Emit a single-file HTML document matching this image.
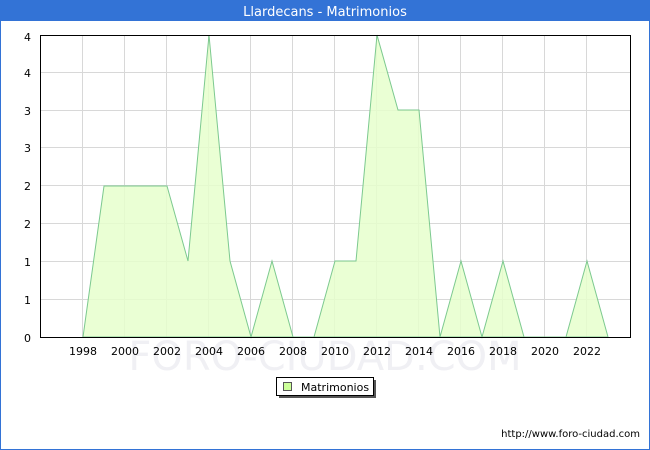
<!DOCTYPE html><html><head><style>body{margin:0}svg{display:block}text{font-family:"DejaVu Sans","Liberation Sans",sans-serif}</style></head><body>
<svg width="650" height="450" xmlns="http://www.w3.org/2000/svg">
<rect x="0" y="0" width="650" height="450" fill="#fff" stroke="#3373d6" stroke-width="2"/>
<rect x="0" y="0" width="650" height="21" fill="#3373d6"/>
<text x="325" y="16" fill="#fff" font-size="13" text-anchor="middle">Llardecans - Matrimonios</text>
<text x="325" y="370" fill="#f0f0f4" font-size="40" text-anchor="middle">FORO-CIUDAD.COM</text>
<g stroke="#d8d8d8" stroke-width="1">
<line x1="40" x2="630" y1="72.5" y2="72.5"/><line x1="40" x2="630" y1="110.5" y2="110.5"/><line x1="40" x2="630" y1="147.5" y2="147.5"/><line x1="40" x2="630" y1="185.5" y2="185.5"/><line x1="40" x2="630" y1="223.5" y2="223.5"/><line x1="40" x2="630" y1="261.5" y2="261.5"/><line x1="40" x2="630" y1="299.5" y2="299.5"/>
<line x1="82.5" x2="82.5" y1="35" y2="337"/><line x1="124.5" x2="124.5" y1="35" y2="337"/><line x1="166.5" x2="166.5" y1="35" y2="337"/><line x1="208.5" x2="208.5" y1="35" y2="337"/><line x1="250.5" x2="250.5" y1="35" y2="337"/><line x1="292.5" x2="292.5" y1="35" y2="337"/><line x1="334.5" x2="334.5" y1="35" y2="337"/><line x1="376.5" x2="376.5" y1="35" y2="337"/><line x1="418.5" x2="418.5" y1="35" y2="337"/><line x1="460.5" x2="460.5" y1="35" y2="337"/><line x1="502.5" x2="502.5" y1="35" y2="337"/><line x1="544.5" x2="544.5" y1="35" y2="337"/><line x1="586.5" x2="586.5" y1="35" y2="337"/>
</g>
<polygon fill="#e6ffcc" fill-opacity="0.85" stroke="#7cc98f" stroke-width="1" points="83,337 104,186 125,186 146,186 167,186 188,261 209,35 230,261 251,337 272,261 293,337 314,337 335,261 356,261 377,35 398,110 419,110 440,337 461,261 482,337 503,261 524,337 545,337 566,337 587,261 608,337"/>
<rect x="40.5" y="35.5" width="590" height="302" fill="none" stroke="#000" stroke-width="1"/>
<g font-size="11" text-anchor="end" fill="#000">
<text x="31" y="41">4</text><text x="31" y="77">4</text><text x="31" y="115">3</text><text x="31" y="152">3</text><text x="31" y="190">2</text><text x="31" y="228">2</text><text x="31" y="266">1</text><text x="31" y="304">1</text><text x="31" y="342">0</text>
</g>
<g font-size="11" text-anchor="middle" fill="#000">
<text x="83" y="355">1998</text><text x="125" y="355">2000</text><text x="167" y="355">2002</text><text x="209" y="355">2004</text><text x="251" y="355">2006</text><text x="293" y="355">2008</text><text x="335" y="355">2010</text><text x="377" y="355">2012</text><text x="419" y="355">2014</text><text x="461" y="355">2016</text><text x="503" y="355">2018</text><text x="545" y="355">2020</text><text x="587" y="355">2022</text>
</g>
<rect x="279" y="380" width="97" height="18" fill="#555"/>
<rect x="276.5" y="377.5" width="97" height="18" fill="#fff" stroke="#000"/>
<rect x="283.5" y="382.5" width="8" height="8" fill="#ccff99" stroke="#555"/>
<text x="301" y="391" font-size="11">Matrimonios</text>
<text x="640" y="437" font-size="10" text-anchor="end">http://www.foro-ciudad.com</text>
</svg></body></html>
